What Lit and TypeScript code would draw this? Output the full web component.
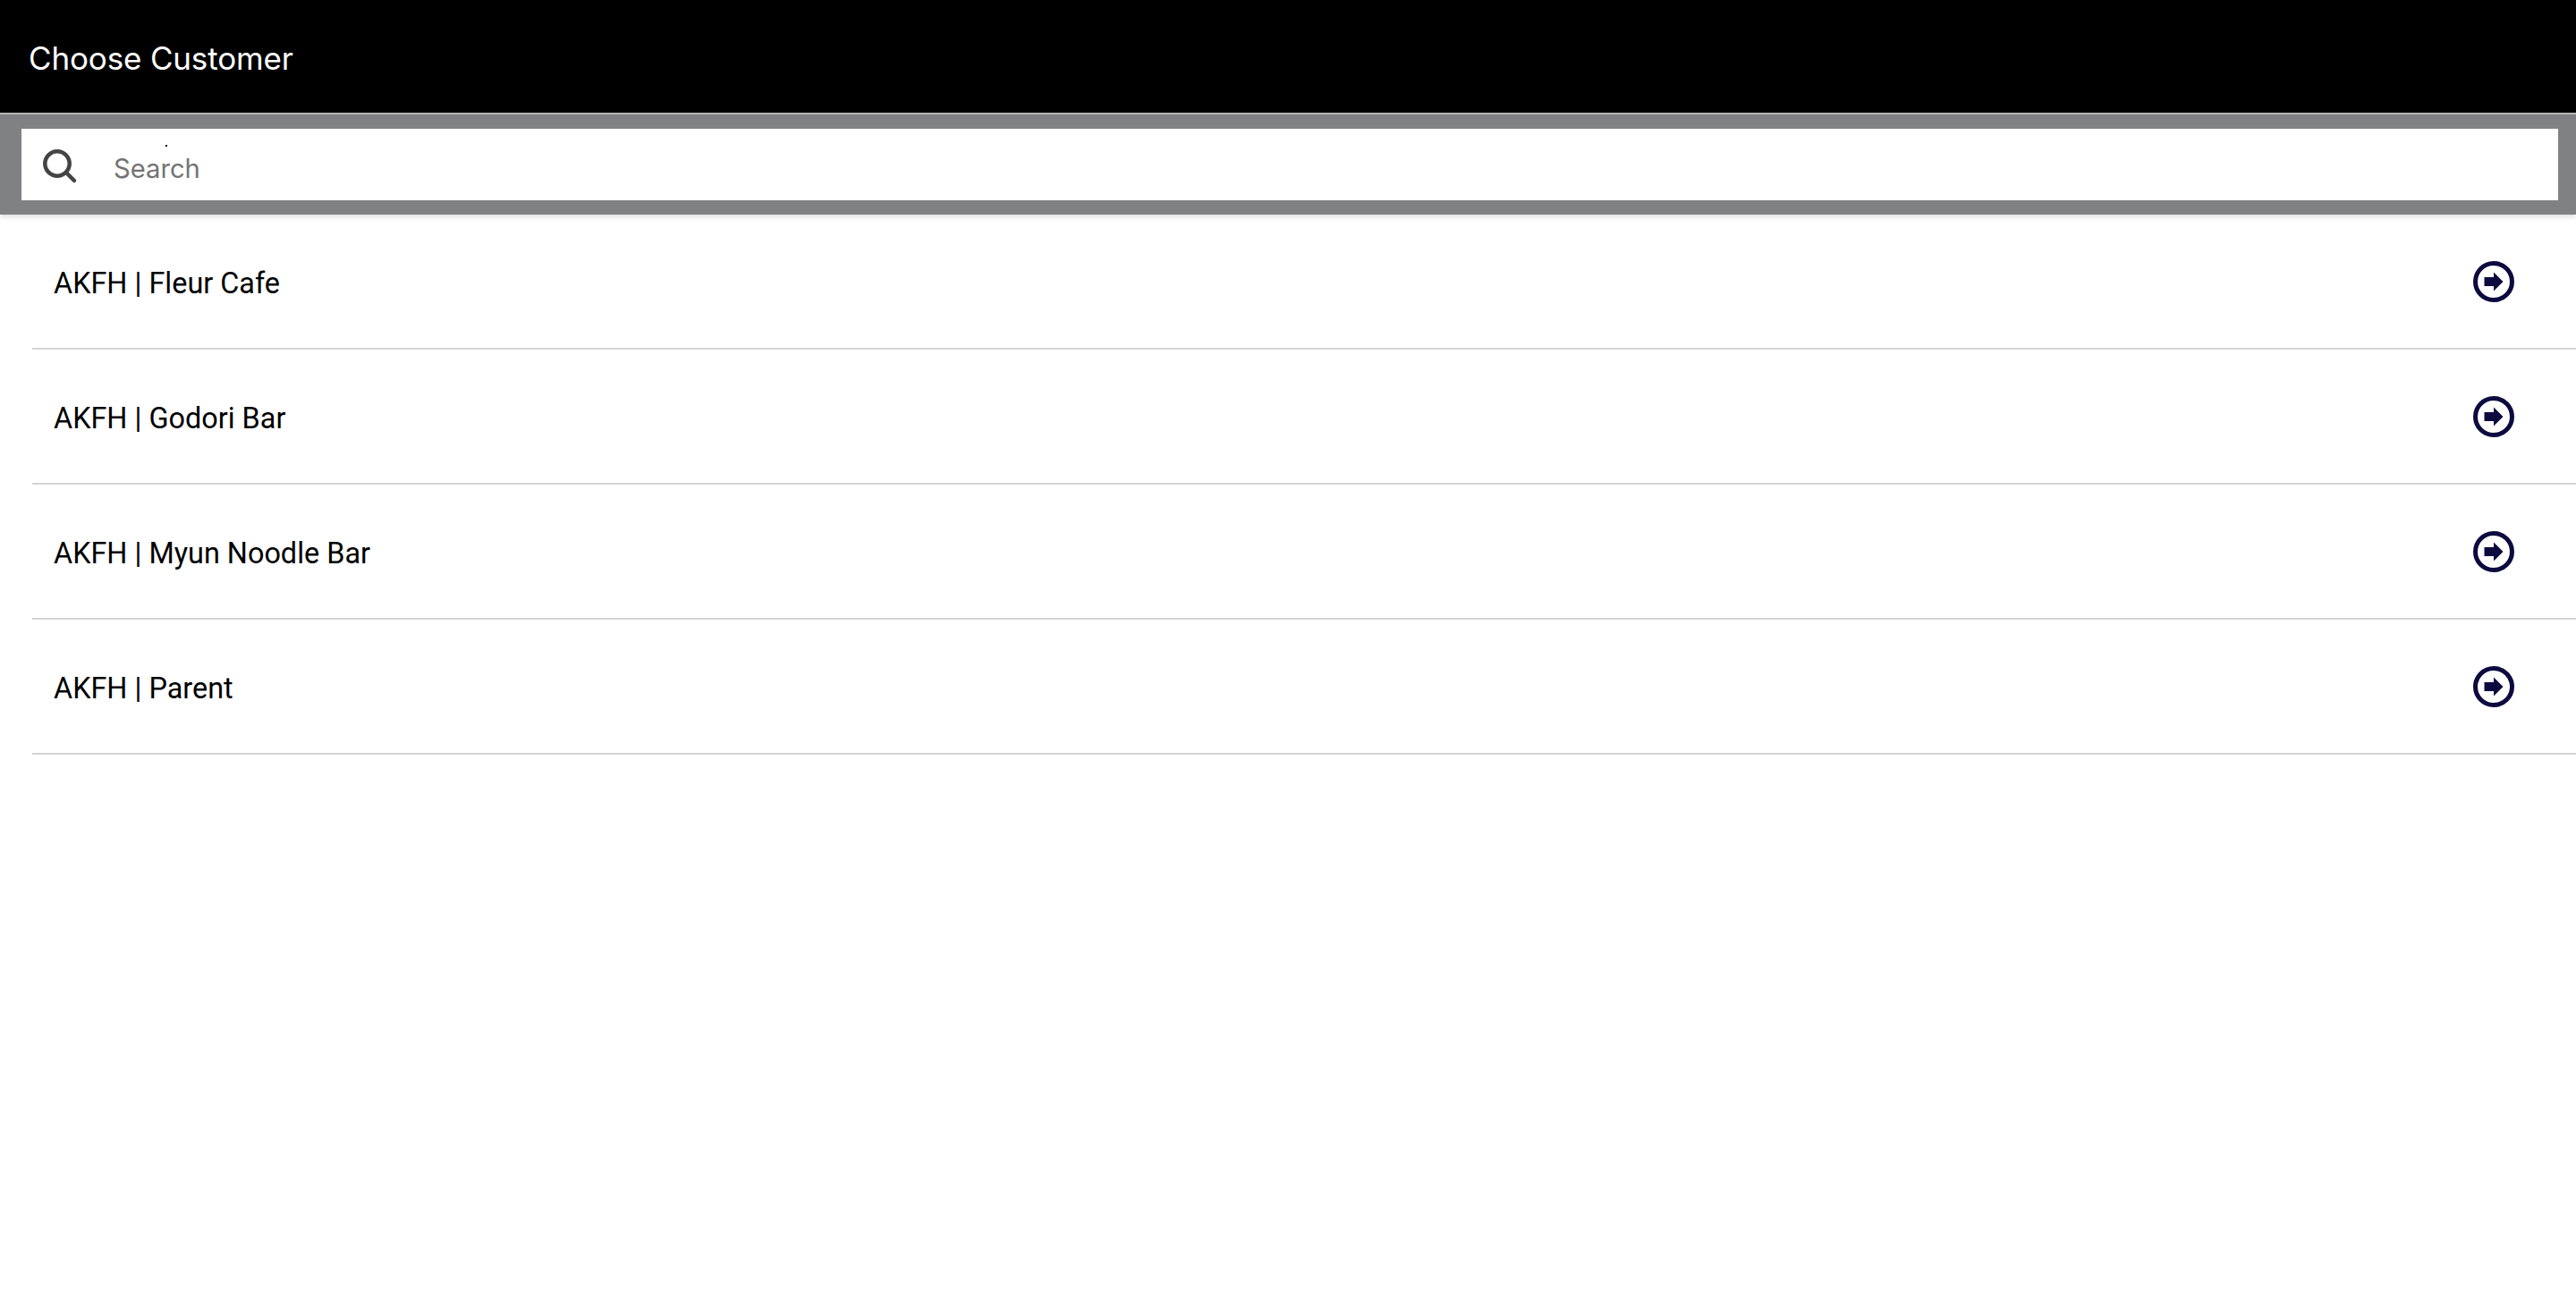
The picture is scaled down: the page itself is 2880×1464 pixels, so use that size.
import { LitElement, html, css } from "lit";
import { customElement } from "lit/decorators.js";

const customers = ["AKFH | Fleur Cafe", "AKFH | Godori Bar", "AKFH | Myun Noodle Bar", "AKFH | Parent"];

@customElement("app-root")
export class AppRoot extends LitElement {
  static styles = css`
    :host { display: block; width: 2880px; height: 1464px; background: #fff; overflow: hidden; }
    .header { height: 126px; background: #000; color: #fff; display: flex; align-items: center; padding: 4px 32px 0; box-sizing: border-box;
      font: 400 35px "Inter", sans-serif; letter-spacing: -0.15px; }
    .bar { border-top: 2px solid #b4b4b4; background: #808183; padding: 16px 20px 16px 24px; box-shadow: 0 3px 5px rgba(0,0,0,.12); position: relative; }
    .search { height: 80px; background: #fff; display: flex; align-items: center; position: relative; }
    .search svg { width: 48px; height: 48px; margin-left: 20px; flex: none; }
    .placeholder { margin-left: 35px; font: 400 29.2px "Inter", sans-serif; color: #737373; padding-top: 8px; }
    .dot { position: absolute; left: 161px; top: 18px; width: 2px; height: 2px; background: #000; }
    .list { margin: 0; padding: 0 0 0 36px; list-style: none; }
    .row { height: 151px; box-sizing: border-box; border-bottom: 2px solid #d4d4d4; display: flex; align-items: center; justify-content: space-between;
      padding: 0 69px 0 24px; font: 400 32.4px "Roboto", sans-serif; color: #000; }
    .row span { padding-top: 4px; }
    .row svg { width: 46px; height: 46px; flex: none; }
  `;

  render() {
    return html`
      <div class="header">Choose Customer</div>
      <div class="bar">
        <div class="search">
          <svg viewBox="0 0 48 48" fill="none" stroke="#444" stroke-width="4.5" stroke-linecap="round">
            <circle cx="20" cy="23" r="13.7" />
            <path d="M30 33 L39 42" />
          </svg>
          <span class="placeholder">Search</span>
          <i class="dot"></i>
        </div>
      </div>
      <ul class="list">
        ${customers.map(
          (c) => html`<li class="row">
            <span>${c}</span>
            <svg viewBox="0 0 46 46">
              <circle cx="23" cy="23" r="20.5" fill="none" stroke="#0c0a3e" stroke-width="5" />
              <path d="M12.5 18 H23 V12.5 L33.5 23 L23 33.5 V28 H12.5 Z" fill="#0c0a3e" />
            </svg>
          </li>`
        )}
      </ul>
    `;
  }
}
